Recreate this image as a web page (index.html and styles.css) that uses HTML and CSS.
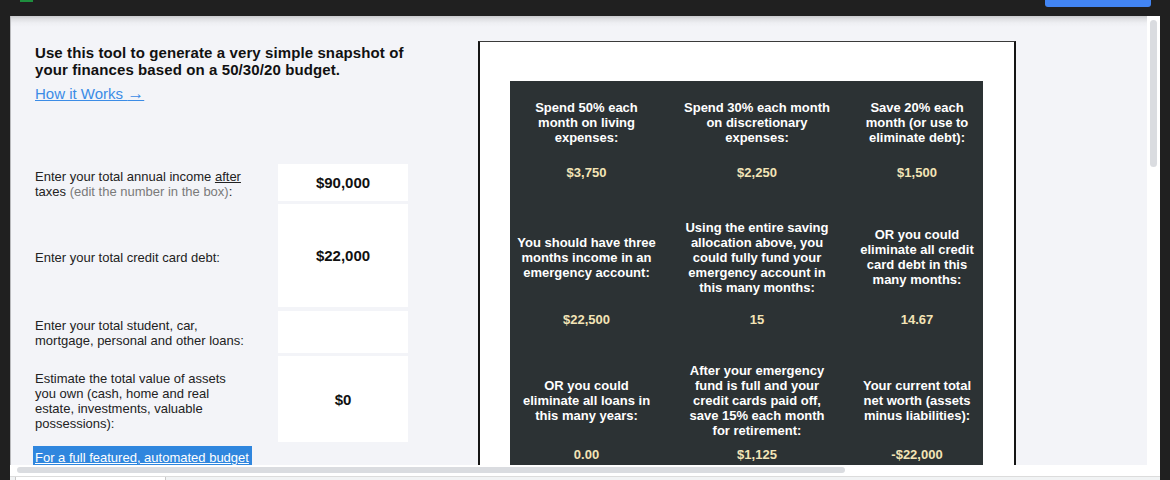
FILE: index.html
```html
<!DOCTYPE html>
<html lang="en">
<head>
<meta charset="utf-8">
<title>50/30/20 Budget Snapshot</title>
<link rel="stylesheet" href="styles.css">
</head>
<body>
<div class="topbar">
  <span class="app-mark"></span>
  <span class="share-btn"></span>
</div>
<div class="window">
  <div class="frame">
    <div class="main">
      <div class="sheet">
        <div class="intro">
          <p class="title">Use this tool to generate a very simple snapshot of your finances based on a 50/30/20 budget.</p>
          <a class="how" href="#">How it Works <span class="arrow">&#8594;</span></a>
        </div>

        <div class="label r3"><span class="label-text">Enter your total annual income <u>after</u> taxes <span class="muted">(edit the number in the box)</span>:</span></div>
        <div class="input r3 gap-top">$90,000</div>

        <div class="label r4"><span class="label-text">Enter your total credit card debt:</span></div>
        <div class="input r4">$22,000</div>

        <div class="label r5"><span class="label-text">Enter your total student, car, mortgage, personal and other loans:</span></div>
        <div class="input r5 gap-top"></div>

        <div class="label r6"><span class="label-text">Estimate the total value of assets you own (cash, home and real estate, investments, valuable possessions):</span></div>
        <div class="input r6">$0</div>

        <div class="cta"><a class="cta-link" href="#">For a full featured, automated budget</a></div>

        <div class="result-box">
          <div class="panel">
            <div class="ph c1">Spend 50% each month on living expenses:</div>
            <div class="ph c2">Spend 30% each month on discretionary expenses:</div>
            <div class="ph c3">Save 20% each month (or use to eliminate debt):</div>

            <div class="pv c1">$3,750</div>
            <div class="pv c2">$2,250</div>
            <div class="pv c3">$1,500</div>

            <div class="ph c1">You should have three months income in an emergency account:</div>
            <div class="ph c2">Using the entire saving allocation above, you could fully fund your emergency account in this many months:</div>
            <div class="ph c3">OR you could eliminate all credit card debt in this many months:</div>

            <div class="pv c1">$22,500</div>
            <div class="pv c2">15</div>
            <div class="pv c3">14.67</div>

            <div class="ph c1">OR you could eliminate all loans in this many years:</div>
            <div class="ph c2">After your emergency fund is full and your credit cards paid off, save 15% each month for retirement:</div>
            <div class="ph c3">Your current total net worth (assets minus liabilities):</div>

            <div class="pv c1">0.00</div>
            <div class="pv c2">$1,125</div>
            <div class="pv c3">-$22,000</div>
          </div>
        </div>
      </div>
      <div class="vscroll"><div class="vthumb"></div></div>
    </div>
    <div class="hscroll"><div class="hthumb"></div></div>
    <div class="tabs"><div class="tab"></div></div>
  </div>
</div>
</body>
</html>
```

FILE: styles.css
```css
* { box-sizing: border-box; }

html, body {
  margin: 0;
  padding: 0;
}

body {
  width: 1170px;
  height: 480px;
  overflow: hidden;
  background: #202020;
  font-family: "Liberation Sans", Arial, sans-serif;
  color: #222;
}

.topbar {
  height: 16px;
  display: flex;
  align-items: flex-start;
}

.app-mark {
  display: block;
  margin-left: 20px;
  width: 13px;
  height: 2px;
  background: #1e8e3e;
}

.share-btn {
  display: block;
  margin-left: auto;
  margin-right: 19px;
  width: 106px;
  height: 7px;
  background: #4285f4;
  border-radius: 0 0 3px 3px;
}

.window {
  display: flex;
  padding-left: 10px;
  height: 464px;
}

.frame {
  width: 1150px;
  height: 464px;
  display: flex;
  flex-direction: column;
  background: #fff;
}

.main {
  display: flex;
  height: 449px;
}

.sheet {
  width: 1137px;
  height: 449px;
  overflow: hidden;
  background: linear-gradient(to bottom, #c9cacd 0, #dfe0e3 3px, #eeeff3 7px, #f3f4f8 11px);
  box-shadow: inset 1px 0 0 #b9babd;
  display: grid;
  grid-template-columns: 23px 245px 130px 70px 538px 131px;
  grid-template-rows: 25px 122px 41px 106px 46px 89px 40px;
}

.intro {
  grid-column: 2 / 4;
  grid-row: 2;
  padding: 3px 0 0 2px;
}

.title {
  margin: 0;
  font-size: 15px;
  line-height: 17px;
  font-weight: bold;
  letter-spacing: 0.1px;
  color: #111;
}

.how {
  display: inline-block;
  margin-top: 7px;
  font-size: 15px;
  line-height: 17px;
  color: #3b8ce6;
  text-decoration: underline;
}

.arrow {
  font-size: 17px;
  line-height: 15px;
}

.label {
  grid-column: 2;
  display: flex;
  align-items: center;
  padding: 0 28px 0 2px;
  font-size: 13px;
  line-height: 15px;
  color: #222;
}

.label-text { display: block; }

.muted { color: #7a7a7a; }

.r3 { grid-row: 3; }
.r4 { grid-row: 4; }
.r5 { grid-row: 5; }
.r6 { grid-row: 6; }

.input {
  grid-column: 3;
  margin: 0 0 3px;
  background: #fff;
  display: flex;
  align-items: center;
  justify-content: center;
  font-size: 15px;
  font-weight: bold;
  color: #111;
}

.input.gap-top { margin-top: 1px; }

.cta {
  grid-column: 2 / 4;
  grid-row: 7;
}

.cta-link {
  display: inline-block;
  margin-top: 1px;
  padding: 3px 3px 0 2px;
  height: 25px;
  line-height: 17px;
  font-size: 13px;
  background: #2f86de;
  color: #fff;
  text-decoration: underline;
}

.result-box {
  grid-column: 5;
  grid-row: 2 / 8;
  background: #fff;
  border-top: 1px solid #3a3a3a;
  border-left: 2px solid #151515;
  border-right: 2px solid #151515;
  padding: 39px 0 0 30px;
}

.panel {
  width: 473px;
  background: #2c3234;
  display: grid;
  grid-template-columns: 153px 11px 166px 11px 132px;
  grid-template-rows: 82px 41px 106px 46px 89px 40px;
  font-size: 13px;
  line-height: 15px;
  font-weight: bold;
  text-align: center;
}

.c1 { grid-column: 1; }
.c2 { grid-column: 3; }
.c3 { grid-column: 5; }

.ph {
  display: flex;
  align-items: center;
  justify-content: center;
  padding: 0 6px;
  color: #fff;
}

.pv {
  padding-top: 2px;
  color: #f3e4b6;
}

.vscroll {
  width: 13px;
  height: 449px;
  background: #fff;
  padding: 4px 3px 0 3px;
}

.vthumb {
  width: 7px;
  height: 147px;
  background: #dadce0;
  border-radius: 4px;
}

.hscroll {
  height: 11px;
  background: #fff;
  padding: 2px 0 0 7px;
}

.hthumb {
  width: 828px;
  height: 6px;
  background: #dadce0;
  border-radius: 3px;
}

.tabs {
  height: 4px;
  background: #f1f3f4;
  border-top: 1px solid #dcdcdc;
}

.tab {
  margin-left: 5px;
  width: 151px;
  height: 3px;
  background: #fff;
  border-left: 1px solid #c8c8c8;
  border-right: 1px solid #c8c8c8;
}
```
